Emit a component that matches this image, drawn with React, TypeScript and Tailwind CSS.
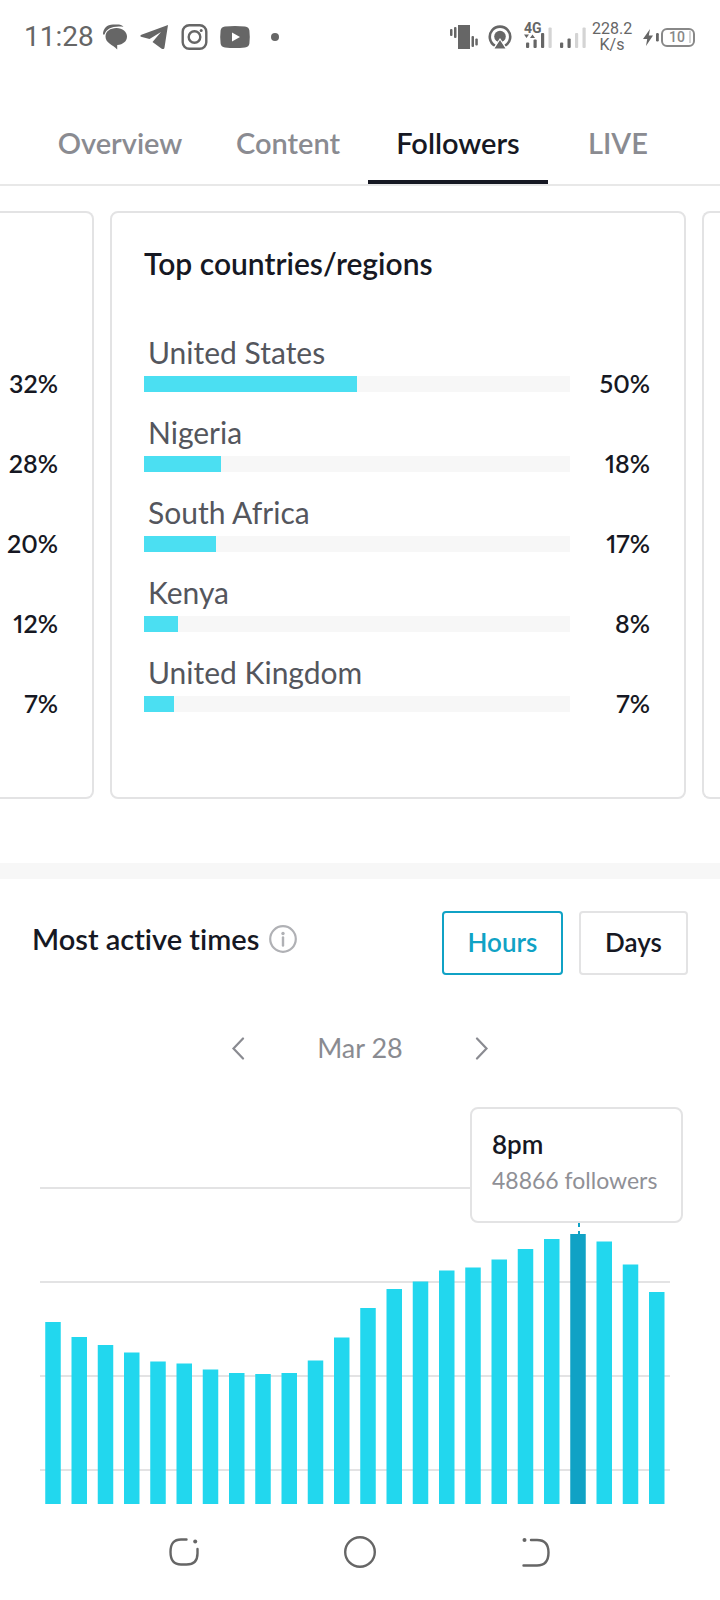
import { useState } from "react";

const tabs = ["Overview", "Content", "Followers", "LIVE"];

const previousCard = [32, 28, 20, 12, 7];

const countries = [
    { name: "United States", percent: 50 },
    { name: "Nigeria", percent: 18 },
    { name: "South Africa", percent: 17 },
    { name: "Kenya", percent: 8 },
    { name: "United Kingdom", percent: 7 },
];

// bar heights per hour, 0:00 - 23:00
const hours = [
    182, 167, 159, 151.5, 142.5, 140.5, 134.5, 131, 130, 131, 143.5, 166.5,
    196, 215, 222.5, 233.5, 236.5, 244.5, 255, 265, 270, 262.5, 239.5, 212,
];
const activeHour = 20;
const gridLines = [1, 95, 189, 283];
const slot = 26.25;
const chartHeight = 317;

function StatusBar() {
    return (
        <header className="flex h-[74px] items-center justify-between pl-6 pr-[25px] font-['Roboto',sans-serif] text-[#666666]">
            <div className="flex items-center">
                <span className="w-[72px] text-[28px] leading-9">11:28</span>
                <svg className="ml-1.5 h-7 w-7" viewBox="0 0 28 28" fill="currentColor">
                    <path d="M1 11.500C1 5.500 5 1.500 11 1.500h4c3 0 5 .6 6.500 2.300C11 2.500 4.500 5.500 2.500 11.500z" />
                    <path d="M14.500 5C20.500 5 25 8.800 25 13.500c0 4.800-3.800 8-9.800 8.500v4.500C13 24 10 22.500 7.500 20.500 5 18.500 3.500 16.500 3.500 13.500 3.500 8.500 8 5 14.500 5z" />
                </svg>
                <svg className="ml-2.5 h-7 w-7" viewBox="0 0 28 28" fill="currentColor">
                    <path d="M28 2 24.500 24.500c-.3 1.700-1.500 2-2.800 1.200L12.500 19 21 9 9.500 16 1 13.700c-1-.5-.8-1.400.4-2z" />
                </svg>
                <svg className="ml-3 h-7 w-7" viewBox="0 0 28 28" fill="none" stroke="currentColor" strokeWidth="2.400">
                    <rect x="2.700" y="2.200" width="23.600" height="23.600" rx="6.500" />
                    <circle cx="14.500" cy="14" r="5.800" />
                    <circle cx="21.200" cy="7.500" r="1.500" fill="currentColor" stroke="none" />
                </svg>
                <svg className="ml-[11px] h-7 w-8" viewBox="0 0 32 28" fill="currentColor">
                    <path fillRule="evenodd" d="M6 3.500Q16 2.300 26 3.500 30 4 30.400 7.500 31.200 14 30.400 20.500 30 24 26 24.500 16 25.700 6 24.500 2 24 1.600 20.500.8 14 1.600 7.500 2 4 6 3.500zM13 9.500v9l8-4.500z" />
                </svg>
                <span className="ml-5 h-2 w-2 rounded-full bg-[#666666]" />
            </div>
            <div className="flex items-center">
                <svg className="h-7 w-7" viewBox="0 0 28 28" fill="currentColor">
                    <rect x="8" y="2" width="12" height="24" />
                    <rect y="6" width="2.500" height="7" rx="1" />
                    <rect x="4" y="4" width="2.500" height="11" rx="1" />
                    <rect x="21.500" y="13" width="2.500" height="11" rx="1" />
                    <rect x="25.300" y="15.500" width="2.500" height="7" rx="1" />
                </svg>
                <svg className="ml-2.5 h-6 w-6" viewBox="0 0 24 24" fill="none" stroke="currentColor">
                    <path strokeWidth="2.600" d="M7 20.700A10.200 10.200 0 1 1 17 20.700" />
                    <circle cx="12" cy="11.500" r="5.800" fill="currentColor" stroke="none" />
                    <path fill="currentColor" stroke="#ffffff" strokeWidth="1.200" d="m12 14 6.500 10h-13z" />
                </svg>
                <div className="relative ml-3 h-7 w-7">
                    <span className="absolute left-0 top-0 text-sm font-bold leading-[10px]">4G</span>
                    <svg className="h-7 w-7" viewBox="0 0 28 28" fill="currentColor">
                        <path d="M0 11.500h5L2.500 15zM6 15h5L8.500 11.500z" />
                        <rect x="2" y="19.500" width="3.200" height="5.500" rx="1" />
                        <rect x="9.500" y="16.500" width="3.200" height="8.500" rx="1" />
                        <rect x="17" y="10" width="3.200" height="15" rx="1" />
                        <rect x="24.500" y="4.500" width="3.200" height="20.500" rx="1" fill="#d4d4d4" />
                    </svg>
                </div>
                <svg className="ml-2 h-7 w-7" viewBox="0 0 28 28" fill="currentColor">
                    <rect x="0" y="19.500" width="3.200" height="5.500" rx="1" />
                    <rect x="7.500" y="15.500" width="3.200" height="9.500" rx="1" />
                    <rect x="15" y="10" width="3.200" height="15" rx="1" fill="#d4d4d4" />
                    <rect x="22.500" y="4.500" width="3.200" height="20.500" rx="1" fill="#d4d4d4" />
                </svg>
                <div className="ml-1 w-10 text-center text-base leading-4">
                    228.2
                    <br />
                    K/s
                </div>
                <svg className="ml-[11px] h-6 w-4" viewBox="0 0 16 24" fill="currentColor">
                    <path d="M7 4 0 14h4.200L3 21l7-10.500H5.800z" />
                    <rect x="13" y="8" width="2.800" height="8.500" rx="1.200" />
                </svg>
                <div className="ml-0.5 flex h-[19px] w-[34px] items-center justify-center rounded-md border-2 border-[#888888] text-sm font-medium leading-4 text-[#888888]">
                    <span className="mr-1">10</span>
                    <span className="-mr-1 h-3 w-0.5 bg-[#d4d4d4]" />
                </div>
            </div>
        </header>
    );
}

function Tabs() {
    const [current, setCurrent] = useState("Followers");

    return (
        <nav className="grid h-28 grid-cols-[176fr_160fr_180fr_140fr] border-b-2 border-[#e8e8e8] px-8">
            {tabs.map((tab) => (
                <button
                    key={tab}
                    onClick={() => setCurrent(tab)}
                    className={
                        tab === current
                            ? "border-b-4 border-[#161823] pt-8 text-[29px] font-semibold leading-9 text-[#161823]"
                            : "border-b-4 border-transparent pt-8 text-[29px] font-semibold leading-9 text-[#8a8b91]"
                    }
                >
                    {tab}
                </button>
            ))}
        </nav>
    );
}

function Cards() {
    return (
        <section className="flex gap-4 pt-[25px]">
            <div className="w-[94px] flex-none rounded-r-lg border-2 border-l-0 border-[#e3e3e4] pr-[34px] pt-[162px]">
                <ul className="flex flex-col gap-16">
                    {previousCard.map((percent) => (
                        <li key={percent} className="text-right text-[25px] font-semibold proportional-nums leading-4">
                            {percent}%
                        </li>
                    ))}
                </ul>
            </div>
            <div className="min-w-0 flex-1 rounded-lg border-2 border-[#e3e3e4] pb-[85px] pl-8 pr-[34px] pt-8">
                <h2 className="text-[30px] font-semibold leading-9">Top countries/regions</h2>
                <ul className="mt-[53px] flex flex-col gap-[22px]">
                    {countries.map((c) => (
                        <li key={c.name}>
                            <p className="mb-1.5 pl-1 text-[30px] leading-9 text-[#54565d]">{c.name}</p>
                            <div className="flex h-4 items-end">
                                <div className="h-4 flex-1 bg-[#f7f7f7]">
                                    <div className="h-4 bg-[#4bdff2]" style={{ width: `${c.percent}%` }} />
                                </div>
                                <span className="w-20 text-right text-[25px] font-semibold proportional-nums leading-[18px]">{c.percent}%</span>
                            </div>
                        </li>
                    ))}
                </ul>
            </div>
            <div className="w-[18px] flex-none rounded-l-lg border-2 border-r-0 border-[#e3e3e4]" />
        </section>
    );
}

function Chart() {
    return (
        <div className="relative ml-10 mr-[50px] mt-[119px]">
            <svg className="block h-[317px] w-full" viewBox="0 0 630 317" preserveAspectRatio="none">
                {gridLines.map((y) => (
                    <line key={y} x1="0" x2="630" y1={y} y2={y} stroke="#e3e3e4" strokeWidth="2" />
                ))}
                {hours.map((h, i) => (
                    <rect
                        key={i}
                        x={i * slot + 5.25}
                        y={chartHeight - h}
                        width="15.500"
                        height={h}
                        fill={i === activeHour ? "#10a2c5" : "#22d7ee"}
                    />
                ))}
                <path d="M539 36v4M539 44v4" stroke="#10a2c5" strokeWidth="2" />
            </svg>
            <div className="absolute -right-[13px] -top-20 h-[116px] w-[213px] rounded-lg border-2 border-[#e3e3e4] bg-white px-5 pt-[17px]">
                <p className="text-[26px] font-semibold leading-9">8pm</p>
                <p className="whitespace-nowrap text-[23px] leading-9 text-[#8f9096]">48866 followers</p>
            </div>
        </div>
    );
}

function ActiveTimes() {
    const [mode, setMode] = useState("Hours");

    return (
        <section className="mt-16 border-t-16 border-[#f7f7f7] pt-8">
            <div className="flex items-start justify-between px-8">
                <div className="flex items-center gap-2.5 pt-2.5">
                    <h2 className="text-[29px] font-semibold leading-9">Most active times</h2>
                    <svg className="h-7 w-7" viewBox="0 0 28 28" fill="none" stroke="#b0b1b5">
                        <circle cx="14" cy="14" r="12.800" strokeWidth="2.200" />
                        <path d="M14 12.500v8" strokeWidth="2.400" strokeLinecap="round" />
                        <circle cx="14" cy="8.500" r="1.700" fill="#b0b1b5" stroke="none" />
                    </svg>
                </div>
                <div className="grid grid-cols-[121px_109px] gap-4">
                    {["Hours", "Days"].map((m) => (
                        <button
                            key={m}
                            onClick={() => setMode(m)}
                            className={
                                m === mode
                                    ? "h-16 rounded border-2 border-[#10a2c5] pb-0.5 text-[26px] font-semibold leading-8 text-[#10a2c5]"
                                    : "h-16 rounded border-2 border-[#e3e3e4] pb-0.5 text-[26px] font-semibold leading-8 text-[#161823]"
                            }
                        >
                            {m}
                        </button>
                    ))}
                </div>
            </div>
            <div className="mt-[53px] flex items-center justify-center text-[#8a8b91]">
                <button aria-label="Previous day" className="p-2">
                    <svg className="h-6 w-6" viewBox="0 0 24 24" fill="none" stroke="currentColor" strokeWidth="2.200" strokeLinecap="round">
                        <path d="M17 2.500 7.500 12.500 17 22.500" />
                    </svg>
                </button>
                <span className="w-[204px] text-center text-[27px] leading-9">Mar 28</span>
                <button aria-label="Next day" className="p-2">
                    <svg className="h-6 w-6" viewBox="0 0 24 24" fill="none" stroke="currentColor" strokeWidth="2.200" strokeLinecap="round">
                        <path d="M7 2.500 16.500 12.500 7 22.500" />
                    </svg>
                </button>
            </div>
            <Chart />
        </section>
    );
}

function NavigationBar() {
    return (
        <footer className="flex h-24 items-center justify-center gap-32 text-[#666666]">
            <button aria-label="Recent apps" className="p-2">
                <svg className="h-8 w-8" viewBox="0 0 32 32" fill="none" stroke="currentColor" strokeWidth="2.400" strokeLinecap="round">
                    <path d="M18.500 3.500H13C6 3.500 2.500 7.500 2.500 16S6 28.500 13 28.500h5.500c7.500 0 11-4 11-11V13" />
                    <circle cx="27.200" cy="5.400" r="2" fill="currentColor" stroke="none" />
                </svg>
            </button>
            <button aria-label="Home" className="p-2">
                <svg className="h-8 w-8" viewBox="0 0 32 32" fill="none" stroke="currentColor" strokeWidth="2.400">
                    <circle cx="16" cy="16" r="14.800" />
                </svg>
            </button>
            <button aria-label="Back" className="p-2">
                <svg className="h-8 w-8" viewBox="0 0 32 32" fill="none" stroke="currentColor" strokeWidth="2.400" strokeLinecap="round">
                    <path d="M11 4h6c8 0 11.500 4 11.500 12.500S25 29.500 17 29.500H3.500" />
                    <circle cx="4.500" cy="4" r="2" fill="currentColor" stroke="none" />
                </svg>
            </button>
        </footer>
    );
}

export default function App() {
    return (
        <div className="bg-white font-['Lato',sans-serif] text-[#161823] [font-variant-ligatures:none]">
            <StatusBar />
            <Tabs />
            <Cards />
            <ActiveTimes />
            <NavigationBar />
        </div>
    );
}
